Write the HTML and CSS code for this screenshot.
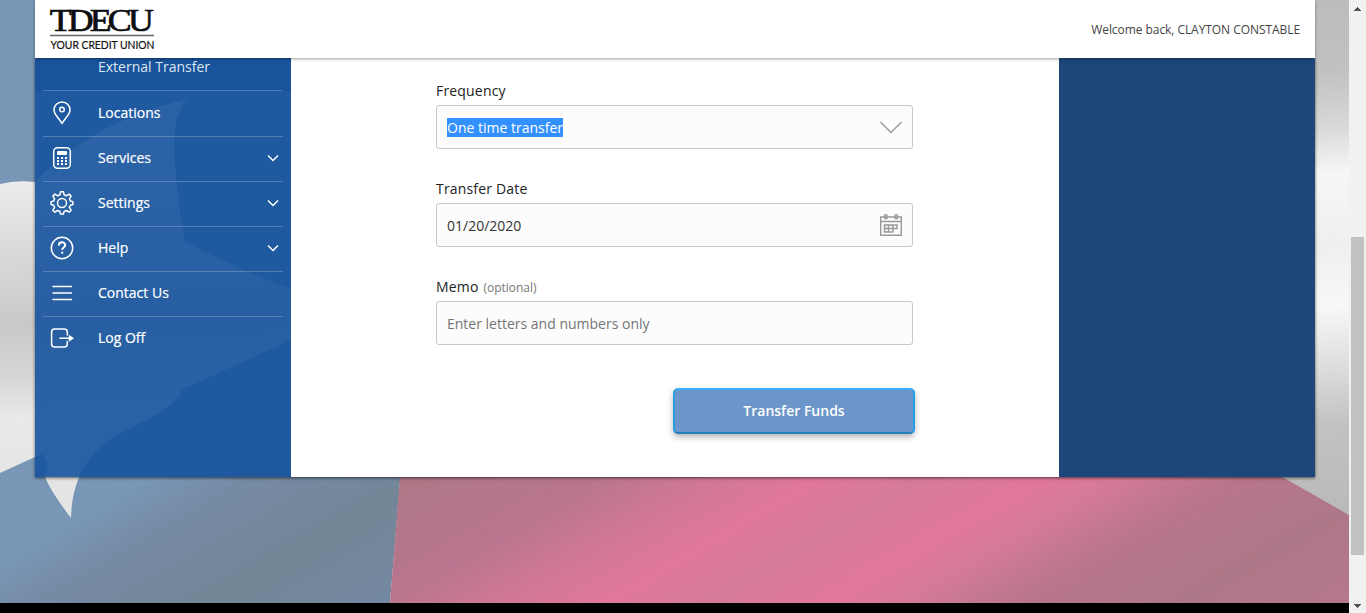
FILE: index.html
```html
<!DOCTYPE html>
<html lang="en">
<head>
<meta charset="utf-8">
<title>TDECU - Transfer Funds</title>
<link rel="stylesheet" href="styles.css">
</head>
<body>
<div class="window">
  <div class="page">
    <svg class="backdrop" width="1349" height="603" viewBox="0 0 1349 603" preserveAspectRatio="none" aria-hidden="true">
      <defs>
        <linearGradient id="blue" gradientUnits="userSpaceOnUse" x1="245" y1="424" x2="360" y2="623">
          <stop offset="0" stop-color="#7997b7"/><stop offset=".22" stop-color="#768ba5"/><stop offset=".6" stop-color="#748798"/><stop offset="1" stop-color="#748aa3"/>
        </linearGradient>
        <linearGradient id="red" gradientUnits="userSpaceOnUse" x1="310" y1="537" x2="600" y2="1039">
          <stop offset="0" stop-color="#b07888"/><stop offset=".16" stop-color="#b9768f"/><stop offset=".26" stop-color="#d27898"/><stop offset=".35" stop-color="#e1789d"/><stop offset=".44" stop-color="#d77b9a"/><stop offset=".545" stop-color="#e2789d"/><stop offset=".61" stop-color="#d67b99"/><stop offset=".71" stop-color="#b9768d"/><stop offset=".85" stop-color="#ae7888"/><stop offset="1" stop-color="#b7788d"/>
        </linearGradient>
        <linearGradient id="star" gradientUnits="userSpaceOnUse" x1="0" y1="181" x2="18" y2="480">
          <stop offset="0" stop-color="#eeeeef"/><stop offset=".2" stop-color="#dedede"/><stop offset=".48" stop-color="#cacaca"/><stop offset=".65" stop-color="#d7d7d7"/><stop offset=".8" stop-color="#ebebeb"/><stop offset="1" stop-color="#e6e6e6"/>
        </linearGradient>
        <linearGradient id="white" gradientUnits="userSpaceOnUse" x1="1320" y1="0" x2="1345" y2="510">
          <stop offset="0" stop-color="#bdbdbd"/><stop offset=".14" stop-color="#c2c2c2"/><stop offset=".25" stop-color="#dadada"/><stop offset=".34" stop-color="#f8f8f8"/><stop offset=".48" stop-color="#f0f0f0"/><stop offset=".6" stop-color="#f9f9f9"/><stop offset=".7" stop-color="#e3e3e3"/><stop offset=".83" stop-color="#c3c3c3"/><stop offset="1" stop-color="#bbb"/>
        </linearGradient>
        <pattern id="weave" width="4" height="4" patternUnits="userSpaceOnUse" patternTransform="rotate(-38)">
          <path d="M0 1h4" stroke="#000" stroke-opacity=".012" stroke-width="1.5"/>
        </pattern>
      </defs>
      <path fill="url(#blue)" d="M0 0H440L390 603H0z"/>
      <path fill="url(#white)" d="M410 0H1349V603H410z"/>
      <path fill="url(#red)" d="M400 477L390 603H1349V515L1270 470H401z"/>
      <path fill="url(#star)" d="M0 184Q16 180 35 182C65 150 110 118 187 99C169 119 174 158 178 195Q181 222 185 242L250 273L291 289L420 330V284L291 340L183 389Q174 405 154 416L117 435C84 455 72 484 71 518Q51 492 45 477L48 465L43 454L35 457L0 473z"/>
      <path fill="url(#weave)" d="M0 0H1349V603H0z"/>
    </svg>

    <header class="topbar">
      <svg class="logo" width="106" height="42" viewBox="0 0 106 42" role="img" aria-label="TDECU Your Credit Union">
        <text class="logo-name" transform="scale(1.12 1)" x="-0.3" y="23" textLength="93" lengthAdjust="spacing">TDECU</text>
        <path d="M0 27.500h104" stroke="#666" stroke-width="1.3"/>
        <text class="logo-tag" x="0.5" y="40.5" textLength="104" lengthAdjust="spacingAndGlyphs">YOUR CREDIT UNION</text>
      </svg>
      <p class="welcome">Welcome back, CLAYTON CONSTABLE</p>
    </header>

    <div class="columns">
      <nav class="sidebar">
        <a class="subitem">External Transfer</a>
        <a class="item">
          <svg class="icon" viewBox="0 0 24 24"><path d="M12 22.5C9 17 4 13.700 4 9a8 8 0 0 1 16 0c0 4.700-5 8-8 13.500z"/><circle cx="12" cy="8.500" r="2.300"/></svg>
          <span class="label">Locations</span>
        </a>
        <a class="item">
          <svg class="icon" viewBox="0 0 24 24"><rect x="3.700" y="1.700" width="16.600" height="20.600" rx="4"/><rect class="solid" x="7" y="5" width="10" height="4" rx="1"/><path class="keys" d="M7 12h10M7 15h10M7 18h10"/></svg>
          <span class="label">Services</span>
          <svg class="caret" viewBox="0 0 12 8"><path d="M1 1.500l5 5 5-5"/></svg>
        </a>
        <a class="item">
          <svg class="icon" viewBox="0 0 24 24"><path d="M10.600 1.900h2.800l.7 3.100 2.300 1 2.700-1.700 2 2-1.700 2.700 1 2.300 2.500.6v2.900l-2.500.6-1 2.200 1.700 2.800-2 2-2.700-1.700-2.300 1-.7 2.600h-2.800L9.900 21.700l-2.300-1-2.700 1.700-2-2 1.700-2.800-1-2.200-2.500-.6v-2.900l2.500-.6 1-2.300-1.700-2.700 2-2 2.700 1.700 2.300-1z" transform="translate(0 -1.200)"/><circle cx="12" cy="12" r="4.500"/></svg>
          <span class="label">Settings</span>
          <svg class="caret" viewBox="0 0 12 8"><path d="M1 1.500l5 5 5-5"/></svg>
        </a>
        <a class="item">
          <svg class="icon" viewBox="0 0 24 24"><circle cx="12" cy="12" r="10.700"/><path class="heavy" d="M8.900 9.400c0-4.100 6.300-4.100 6.300-.4 0 2.500-3 2.600-3 4.800"/><path class="heavy" d="M12.200 15.700v2"/></svg>
          <span class="label">Help</span>
          <svg class="caret" viewBox="0 0 12 8"><path d="M1 1.500l5 5 5-5"/></svg>
        </a>
        <a class="item">
          <svg class="icon" viewBox="0 0 24 24"><path d="M3 5.500h18.500M3 12h18.500M3 18.500h18.500"/></svg>
          <span class="label">Contact Us</span>
        </a>
        <a class="item last">
          <svg class="icon" viewBox="0 0 24 24"><path d="M17.300 9V6q0-3-3-3H4.600q-3 0-3 3v12q0 3 3 3h9.700q3 0 3-3v-2.500M10 12.300h9"/><path class="solid" d="M18.800 8.800l5.200 3.500-5.200 3.500z"/></svg>
          <span class="label">Log Off</span>
        </a>
      </nav>

      <main class="content">
        <form class="form">
          <div class="field">
            <label class="field-label">Frequency</label>
            <div class="control">
              <span class="selected">One time transfer</span>
              <svg class="chevron" width="24" height="14" viewBox="0 0 24 14"><path d="M1.500 2L12 12.500 22.500 2"/></svg>
            </div>
          </div>
          <div class="field">
            <label class="field-label">Transfer Date</label>
            <div class="control">
              <span class="date">01/20/2020</span>
              <svg class="calendar" width="24" height="24" viewBox="0 0 24 24"><path d="M1.700 4h20.600v18.300H1.700zM1.700 8.500h20.600"/><path class="grid" d="M5.500 12H18v3.500h-4V19H5.500zM5.500 15.500H14M9.500 12v7M13.800 12v3.500"/><rect x="5.500" y="1.700" width="2.600" height="4" rx="1"/><rect x="16" y="1.700" width="2.600" height="4" rx="1"/></svg>
            </div>
          </div>
          <div class="field">
            <label class="field-label">Memo <span class="optional">(optional)</span></label>
            <div class="control"><span class="placeholder">Enter letters and numbers only</span></div>
          </div>
          <button class="submit" type="button">Transfer Funds</button>
        </form>
      </main>
      <aside class="rail"></aside>
    </div>
    <div class="footer"></div>
  </div>

  <div class="scrollbar">
    <svg class="arrow" width="7" height="4" viewBox="0 0 7 4" shape-rendering="crispEdges"><path d="M3 0h1v1h1v1h1v1h1v1H0V3h1V2h1V1h1z"/></svg>
    <div class="thumb"></div>
    <svg class="arrow" width="7" height="4" viewBox="0 0 7 4" shape-rendering="crispEdges"><path d="M0 0h7v1H6v1H5v1H4v1H3V3H2V2H1V1H0z"/></svg>
  </div>
</div>
</body>
</html>
```
FILE: styles.css
```css
* { box-sizing: border-box; }
body { margin: 0; font-family: "Open Sans", "Noto Sans", sans-serif; font-size: 14px; color: #333; overflow: hidden; }
.window { display: grid; grid-template-columns: 1349px 17px; height: 613px; }

.page { position: relative; display: flex; flex-direction: column; height: 613px; overflow: hidden; }
.backdrop { position: absolute; top: 0; left: 0; z-index: 0; }

.topbar { position: relative; z-index: 2; width: 1280px; height: 58px; margin-left: 35px; padding: 0 15px; display: flex; align-items: center; justify-content: space-between; background: #fff; box-shadow: 0 1px 3px rgba(0, 0, 0, .38); }
.logo { display: block; overflow: visible; }
.logo-name { font: 32px "Liberation Serif", serif; fill: #0b0e0e; stroke: #0b0e0e; stroke-width: .7; }
.logo-tag { font: 11.5px Lato, sans-serif; fill: #111; stroke: #111; stroke-width: .2; }
.welcome { margin: 0; font-size: 12px; letter-spacing: -.06px; color: #444; }

.columns { position: relative; z-index: 1; display: grid; grid-template-columns: 256px 768px 256px; width: 1280px; height: 419px; margin-left: 35px; box-shadow: 0 1px 3px rgba(0, 0, 0, .6); }

.sidebar { display: flex; flex-direction: column; background: rgba(21, 83, 157, .9); color: #fff; }
.subitem { height: 33px; padding-left: 63px; line-height: 18px; color: #dce6f1; background: linear-gradient(#4b79b1, #4b79b1) 8px 32px / 240px 1px no-repeat, #18539b; }
.item { display: flex; align-items: center; height: 45px; margin: 0 8px; padding-bottom: 2px; border-bottom: 1px solid rgba(255, 255, 255, .22); }
.item:nth-child(2) { height: 46px; }
.item.last { padding-bottom: 3px; border-bottom: 0; }
.icon { width: 24px; height: 24px; margin: 0 24px 0 7px; fill: none; stroke: #fff; stroke-width: 1.5; stroke-linejoin: round; stroke-linecap: round; }
.icon .solid { fill: #fff; stroke: none; }
.icon .keys { stroke-width: 2; stroke-dasharray: 2 2; stroke-linecap: butt; }
.icon .heavy { stroke-width: 2; stroke-linecap: butt; }
.label { flex: 1; line-height: 20px; -webkit-text-stroke: .2px #fff; }
.caret { width: 12px; height: 8px; margin-right: 4px; fill: none; stroke: #fff; stroke-width: 1.5; }

.content { background: #fff; }
.form { width: 479px; margin-left: 145px; padding-top: 23px; display: flex; flex-direction: column; }
.field { width: 477px; height: 98px; }
.field-label { display: block; height: 24px; line-height: 20px; letter-spacing: .18px; color: #222; }
.optional { margin-left: 1px; font-size: 12px; letter-spacing: 0; color: #777; }
.control { display: flex; align-items: center; justify-content: space-between; height: 44px; padding: 0 9px 0 10px; border: 1px solid #c8c8c8; border-radius: 3px; background: #fcfcfc; }
.selected { line-height: 19px; color: #fff; background: #3390ff; }
.placeholder { color: #757575; }
.chevron, .calendar { fill: none; stroke: #999; stroke-width: 1.4; }
.calendar .grid { stroke-width: 1.5; }
.submit { align-self: flex-end; width: 242px; height: 46px; margin-top: 13px; padding: 0 0 2px; border: 2px solid; border-color: #36aff6 #279ee2 #2380bb #279ee2; border-radius: 5px; background: #6c96c9; color: #fff; font: 600 14px "Open Sans", sans-serif; box-shadow: 0 3px 6px rgba(0, 0, 0, .3); }

.rail { background: #1d4779; }
.footer { position: relative; z-index: 1; height: 10px; margin-top: auto; background: #000; }

.scrollbar { display: flex; flex-direction: column; align-items: center; height: 613px; padding: 7px 0 5px; background: #f1f1f1; }
.arrow { flex: none; fill: #505050; }
.thumb { width: 13px; height: 318px; margin: 226px 0 auto; background: #c1c1c1; }
```
